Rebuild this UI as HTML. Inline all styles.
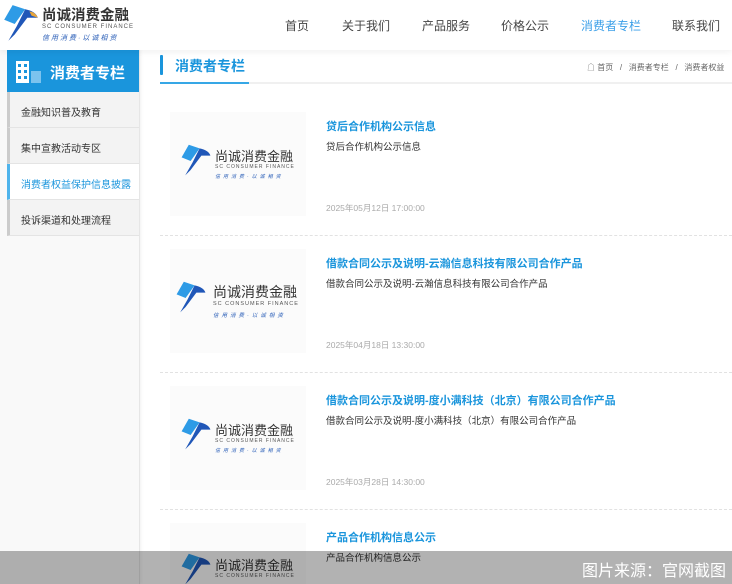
<!DOCTYPE html>
<html style="width:732px;height:584px;overflow:hidden"><head><meta charset="utf-8"><style>
*{margin:0;padding:0;box-sizing:border-box}
body{width:732px;height:584px;overflow:hidden;position:relative;background:#fff;font-family:"Liberation Sans","Noto Sans CJK SC",sans-serif;color:#333}
.hdr{position:absolute;left:0;top:0;width:732px;height:50px;background:#fff;box-shadow:0 2px 6px rgba(0,0,0,.06);z-index:2}
.nav{position:absolute;top:17px;font-size:12px;color:#444}
.leftbg{position:absolute;left:0;top:50px;width:140px;height:534px;background:#f9f9f9;border-right:1px solid #e6e6e6;box-shadow:1px 0 3px rgba(0,0,0,.06)}
.sbh{position:absolute;left:7px;top:50px;width:132px;height:42px;background:#1a95dc}
.sbh span{position:absolute;left:43px;top:12px;color:#fff;font-size:15px;font-weight:bold}
.it{position:absolute;left:7px;width:132px;height:36px;background:#f3f3f3;border-left:3px solid #ccc;border-bottom:1px solid #e4e4e4;font-size:10px;color:#333;padding:12px 0 0 11px}
.it.on{background:#fff;border-left-color:#4fb4ec;color:#1a95dc}
.ttl{position:absolute;left:160px;top:52px;width:572px;height:32px;border-bottom:2px solid #f0f0f0}
.ttl b{position:absolute;left:0;top:3px;width:3px;height:20px;background:#1a95dc;border-radius:1px}
.ttl span{position:absolute;left:15px;top:4px;font-size:14px;font-weight:bold;color:#1a95dc}
.ttl i{position:absolute;left:0;bottom:-2px;width:89px;height:2px;background:#36a7e6}
.bc{position:absolute;left:587px;top:62px;font-size:8px;color:#666;white-space:nowrap}
.thumb{position:absolute;left:170px;width:136px;height:104px;background:#fbfbfb}
.h{position:absolute;left:326px;font-size:11px;font-weight:bold;color:#1a95dc}
.d{position:absolute;left:326px;font-size:9.5px;color:#333}
.dt{position:absolute;left:326px;font-size:8.5px;color:#aaa}
.hr{position:absolute;left:160px;width:572px;border-top:1px dashed #e2e2e2}
.ov{position:absolute;left:0;top:551px;width:732px;height:33px;background:rgba(0,0,0,.3);z-index:5}
.ov span{position:absolute;right:6px;top:6px;color:#fff;font-size:16px}
.lg{position:absolute}
.lg .cn{position:absolute;font-weight:bold;color:#333;white-space:nowrap}
.lg .en{position:absolute;color:#555;white-space:nowrap;letter-spacing:1px}
.lg .sl{position:absolute;color:#2b5fb8;white-space:nowrap;font-style:italic}
</style></head><body>
<div class="hdr">
 <div class="lg" style="left:0;top:3px;width:132px;height:42px">
  <svg width="42" height="42" style="position:absolute;left:0;top:0" viewBox="0 0 40 40"><path d="M12 2 L24 6 L14 20 L4 16Z" fill="#2e9be6"/><path d="M24 6 Q34 8 36 14 L26 14 L14 30 L8 36 L16 22Z" fill="#2057b8"/><path d="M28 8 Q34 9 36 14 L30 12Z" fill="#e8a53a"/></svg>
  <div class="cn" style="left:42px;top:1px;font-size:14.5px">尚诚消费金融</div>
  <div class="en" style="left:42px;top:21px;font-size:6px">SC CONSUMER FINANCE</div>
  <div class="sl" style="left:42px;top:30px;font-size:7px;letter-spacing:2px">信用消费·以诚相资</div>
 </div>
 <div class="nav" style="left:285px">首页</div>
 <div class="nav" style="left:342px">关于我们</div>
 <div class="nav" style="left:422px">产品服务</div>
 <div class="nav" style="left:501px">价格公示</div>
 <div class="nav" style="left:581px;color:#3b9fe8">消费者专栏</div>
 <div class="nav" style="left:672px">联系我们</div>
</div>
<div class="leftbg"></div>
<div class="sbh"><svg width="30" height="24" style="position:absolute;left:9px;top:11px"><rect x="0" y="0" width="13" height="22" fill="#fff"/><g fill="#1a95dc"><rect x="2" y="3" width="3" height="3"/><rect x="8" y="3" width="3" height="3"/><rect x="2" y="9" width="3" height="3"/><rect x="8" y="9" width="3" height="3"/><rect x="2" y="15" width="3" height="3"/><rect x="8" y="15" width="3" height="3"/></g><rect x="15" y="10" width="10" height="12" fill="#7cc3ee"/></svg><span>消费者专栏</span></div>
<div class="it" style="top:92px">金融知识普及教育</div>
<div class="it" style="top:128px">集中宣教活动专区</div>
<div class="it on" style="top:164px">消费者权益保护信息披露</div>
<div class="it" style="top:200px">投诉渠道和处理流程</div>
<div class="ttl"><b></b><span>消费者专栏</span><i></i></div>
<div class="bc">&#9750; 首页 &nbsp; / &nbsp; 消费者专栏 &nbsp; / &nbsp; 消费者权益</div>

<div class="thumb" style="top:112px"></div>
<div class="thumb" style="top:249px"></div>
<div class="thumb" style="top:386px"></div>
<div class="thumb" style="top:523px;height:61px"></div>

<div class="lg" style="left:178px;top:143px"><svg width="36" height="36" style="position:absolute;left:0;top:0" viewBox="0 0 40 40"><path d="M12 2 L24 6 L14 20 L4 16Z" fill="#2e9be6"/><path d="M24 6 Q34 8 36 14 L26 14 L14 30 L8 36 L16 22Z" fill="#2057b8"/></svg><div class="cn" style="left:37px;top:3px;font-size:13px;font-weight:normal">尚诚消费金融</div><div class="en" style="left:37px;top:21px;font-size:5px">SC CONSUMER FINANCE</div><div class="sl" style="left:37px;top:30px;font-size:5px;letter-spacing:3px">信用消费·以诚相资</div></div>
<div class="lg" style="left:173px;top:280px"><svg width="36" height="36" style="position:absolute;left:0;top:0" viewBox="0 0 40 40"><path d="M12 2 L24 6 L14 20 L4 16Z" fill="#2e9be6"/><path d="M24 6 Q34 8 36 14 L26 14 L14 30 L8 36 L16 22Z" fill="#2057b8"/></svg><div class="cn" style="left:40px;top:2px;font-size:14px;font-weight:normal">尚诚消费金融</div><div class="en" style="left:40px;top:21px;font-size:5.5px">SC CONSUMER FINANCE</div><div class="sl" style="left:40px;top:31px;font-size:5.5px;letter-spacing:3px">信用消费·以诚相资</div></div>
<div class="lg" style="left:178px;top:417px"><svg width="36" height="36" style="position:absolute;left:0;top:0" viewBox="0 0 40 40"><path d="M12 2 L24 6 L14 20 L4 16Z" fill="#2e9be6"/><path d="M24 6 Q34 8 36 14 L26 14 L14 30 L8 36 L16 22Z" fill="#2057b8"/></svg><div class="cn" style="left:37px;top:3px;font-size:13px;font-weight:normal">尚诚消费金融</div><div class="en" style="left:37px;top:21px;font-size:5px">SC CONSUMER FINANCE</div><div class="sl" style="left:37px;top:30px;font-size:5px;letter-spacing:3px">信用消费·以诚相资</div></div>
<div class="lg" style="left:178px;top:552px;height:32px;width:130px;overflow:hidden"><svg width="36" height="36" style="position:absolute;left:0;top:0" viewBox="0 0 40 40"><path d="M12 2 L24 6 L14 20 L4 16Z" fill="#2e9be6"/><path d="M24 6 Q34 8 36 14 L26 14 L14 30 L8 36 L16 22Z" fill="#2057b8"/></svg><div class="cn" style="left:37px;top:3px;font-size:13px;font-weight:normal">尚诚消费金融</div><div class="en" style="left:37px;top:21px;font-size:5px">SC CONSUMER FINANCE</div></div>

<div class="h" style="top:118px">贷后合作机构公示信息</div>
<div class="d" style="top:139px">贷后合作机构公示信息</div>
<div class="dt" style="top:202px">2025年05月12日 17:00:00</div>
<div class="hr" style="top:235px"></div>
<div class="h" style="top:255px">借款合同公示及说明-云瀚信息科技有限公司合作产品</div>
<div class="d" style="top:276px">借款合同公示及说明-云瀚信息科技有限公司合作产品</div>
<div class="dt" style="top:339px">2025年04月18日 13:30:00</div>
<div class="hr" style="top:372px"></div>
<div class="h" style="top:392px">借款合同公示及说明-度小满科技（北京）有限公司合作产品</div>
<div class="d" style="top:413px">借款合同公示及说明-度小满科技（北京）有限公司合作产品</div>
<div class="dt" style="top:476px">2025年03月28日 14:30:00</div>
<div class="hr" style="top:509px"></div>
<div class="h" style="top:529px">产品合作机构信息公示</div>
<div class="d" style="top:550px">产品合作机构信息公示</div>

<div class="ov"><span>图片来源：官网截图</span></div>
</body></html>
